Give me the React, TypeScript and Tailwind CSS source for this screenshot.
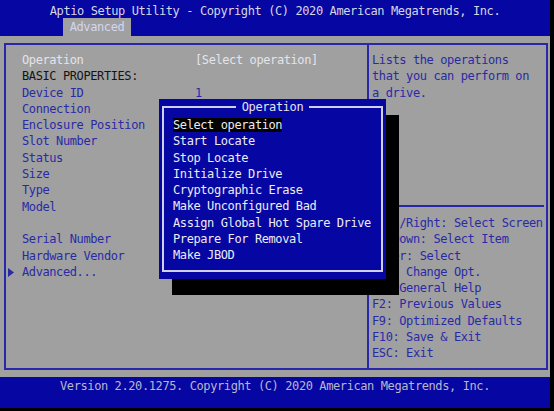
import React from "react";

const mono =
  "font-['DejaVu_Sans_Mono','Liberation_Mono',monospace] text-[12px] tracking-[-0.4px]";

type Row = { label: string; value?: string; tone?: "white" | "black" | "blue"; sub?: boolean };

const rows: Row[] = [
  { label: "Operation", value: "[Select operation]", tone: "white" },
  { label: "BASIC PROPERTIES:", tone: "black" },
  { label: "Device ID", value: "1" },
  { label: "Connection" },
  { label: "Enclosure Position" },
  { label: "Slot Number" },
  { label: "Status" },
  { label: "Size" },
  { label: "Type" },
  { label: "Model" },
  { label: "" },
  { label: "Serial Number" },
  { label: "Hardware Vendor" },
  { label: "Advanced...", sub: true },
];

const keys = [
  "Left/Right: Select Screen",
  "Up/Down: Select Item",
  "Enter: Select",
  "+/-: Change Opt.",
  "F1: General Help",
  "F2: Previous Values",
  "F9: Optimized Defaults",
  "F10: Save & Exit",
  "ESC: Exit",
];

const ops = [
  "Select operation",
  "Start Locate",
  "Stop Locate",
  "Initialize Drive",
  "Cryptographic Erase",
  "Make Unconfigured Bad",
  "Assign Global Hot Spare Drive",
  "Prepare For Removal",
  "Make JBOD",
];

function toneClass(t?: Row["tone"]) {
  if (t === "white") return "text-[#e4e4ec]";
  if (t === "black") return "text-[#141414]";
  return "text-[#2a2aa6]";
}

export default function App() {
  return (
    <div className={`w-[554px] h-[411px] bg-black ${mono} leading-[16.3px] whitespace-pre`}>
      <div className="relative w-[550px] h-[408px] flex flex-col">
        {/* title bar with tab strip */}
        <div className="h-[36px] bg-[#0606a2] flex flex-col">
          <div className="h-[18px] pt-[3px] leading-[16px] text-center text-[#d6d6e6]">
            Aptio Setup Utility - Copyright (C) 2020 American Megatrends, Inc.
          </div>
          <div className="h-[18px] flex">
            <div className="ml-[63px] w-[68px] h-[18px] bg-[#a0a0a0] text-center leading-[18px] text-[#d2d6f0]">
              Advanced
            </div>
          </div>
        </div>

        {/* main area */}
        <div className="flex-1 bg-[#a0a0a0] pl-[4px] pr-[2px] pt-[7px] pb-[7px]">
          <div className="h-full border-2 border-[#2828a8] flex">
            <div className="w-[363px] border-r-2 border-[#2828a8] pt-[7px]">
              {rows.map((r, i) => (
                <div key={i} className="flex h-[16.3px] items-center">
                  <div className="w-[16px] pl-[2px] flex items-center">
                    {r.sub && (
                      <svg width="6" height="9" viewBox="0 0 6 9">
                        <path d="M0 0 L6 4.5 L0 9 Z" fill="#2a2aa6" />
                      </svg>
                    )}
                  </div>
                  <div className={`w-[173px] ${toneClass(r.tone)}`}>{r.label}</div>
                  {r.value && <div className={toneClass(r.tone)}>{r.value}</div>}
                </div>
              ))}
            </div>
            <div className="flex-1 flex flex-col text-[#2a2aa6]">
              <div className="h-[160px] pt-[7px] pl-[3px]">
                <div>Lists the operations</div>
                <div>that you can perform on</div>
                <div>a drive.</div>
              </div>
              <div className="h-[2px] bg-[#2828a8] mr-[2px]" />
              <div className="pt-[8px] pl-[3px]">
                {keys.map((k) => (
                  <div key={k}>{k}</div>
                ))}
              </div>
            </div>
          </div>
        </div>

        {/* status line */}
        <div className="h-[31px] bg-[#0606a2] text-center text-[#b8b8cc] pt-[1px]">
          Version 2.20.1275. Copyright (C) 2020 American Megatrends, Inc.
        </div>

        {/* operation picker dialog */}
        <div className="absolute left-[159px] top-[99px] w-[227px] h-[180px] bg-[#0606a2] shadow-[13px_16px_0_0_#000]">
          <div className="absolute left-[3px] right-[3px] top-[7px] bottom-[7px] border-2 border-[#d0d0e4]" />
          <div className="absolute top-0 left-0 right-0 flex justify-center">
            <div className="bg-[#0606a2] px-[6px] leading-[16px] text-[#e4e4ee]">Operation</div>
          </div>
          <div className="relative pt-[18px] pl-[14px] text-[#ececf2]">
            {ops.map((o, i) => (
              <div key={o} className="h-[16.3px]">
                <span className={i === 0 ? "bg-black" : ""}>{o}</span>
              </div>
            ))}
          </div>
        </div>
      </div>
    </div>
  );
}
